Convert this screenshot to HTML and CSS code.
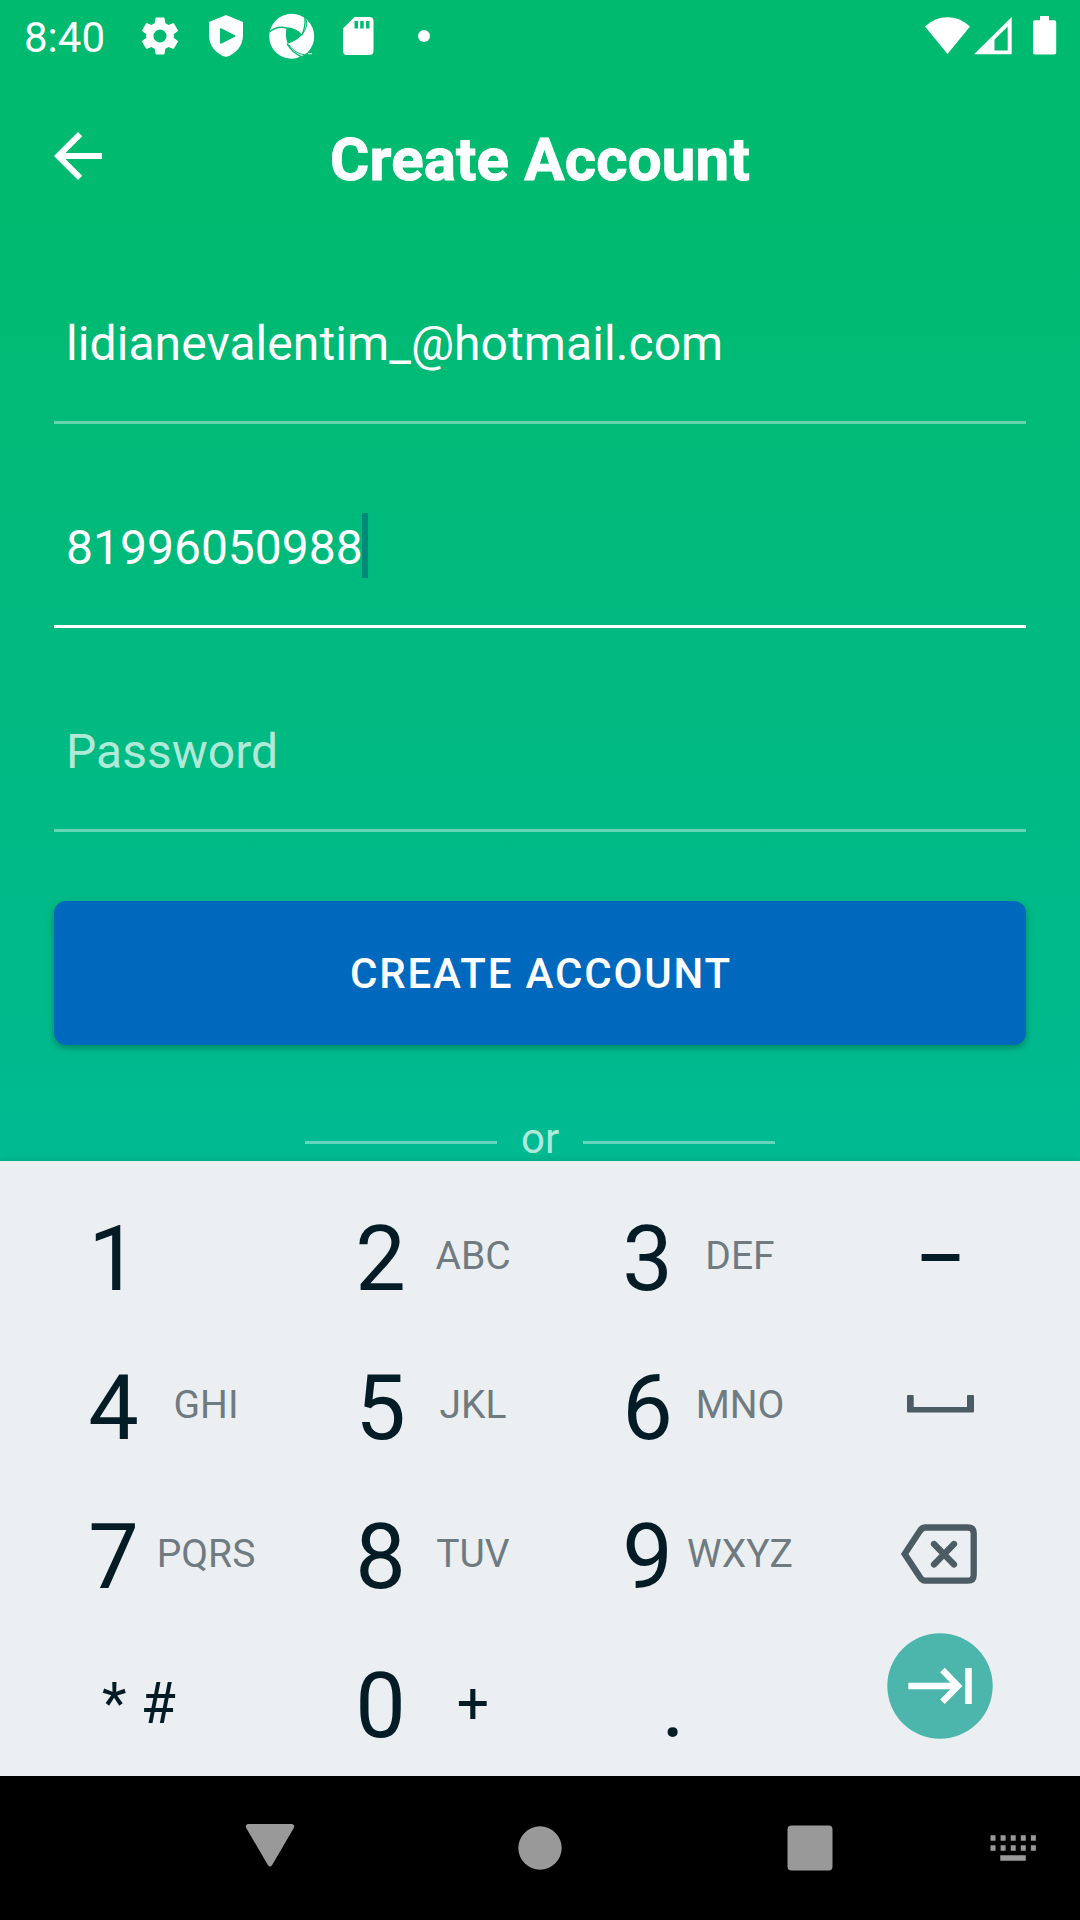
FILE: index.html
```html
<!DOCTYPE html>
<html lang="en">
<head>
<meta charset="utf-8">
<title>Create Account</title>
<link rel="stylesheet" href="styles.css">
</head>
<body>
<div class="screen">
  <div class="app">
    <div class="status">
      <span class="clock">8:40</span>
      <svg class="notifications" width="300" height="72" viewBox="132 0 300 72" fill="#fff">
        <path transform="translate(137 13) scale(1.917)" d="M19.14 12.94c.04-.3.06-.61.06-.94 0-.32-.02-.64-.07-.94l2.03-1.58c.18-.14.23-.41.12-.61l-1.92-3.32c-.12-.22-.37-.29-.59-.22l-2.39.96c-.5-.38-1.03-.7-1.62-.94l-.36-2.54c-.04-.24-.24-.41-.48-.41h-3.84c-.24 0-.43.17-.47.41l-.36 2.54c-.59.24-1.13.57-1.62.94l-2.39-.96c-.22-.08-.47 0-.59.22L2.74 8.87c-.12.21-.08.47.12.61l2.03 1.58c-.05.3-.09.63-.09.94s.02.64.07.94l-2.03 1.58c-.18.14-.23.41-.12.61l1.92 3.32c.12.22.37.29.59.22l2.39-.96c.5.38 1.03.7 1.62.94l.36 2.54c.05.24.24.41.48.41h3.84c.24 0 .44-.17.47-.41l.36-2.54c.59-.24 1.13-.56 1.62-.94l2.39.96c.22.08.47 0 .59-.22l1.92-3.32c.12-.22.07-.47-.12-.61l-2.01-1.58zM12 15.4a3.4 3.4 0 1 1 0-6.8 3.4 3.4 0 0 1 0 6.8z"/>
        <path fill-rule="evenodd" d="M226 15l17 7v13c0 11-7 19-17 22-10-3-17-11-17-22V22zM221 28.3c-.6-.3-1 0-1 .7v14c0 .7.4 1 1 .7l14-7c.6-.3.6-1.100 0-1.400z"/>
        <g fill="none" stroke="#00ba70" stroke-width="1.400">
          <circle cx="291.700" cy="36.300" r="22.500" fill="#fff" stroke="none"/>
          <path fill="#00ba70" stroke="none" d="M286.500 28C292 28 298 30.500 301.700 35.200 297.500 39.500 293 42 287.700 43.700 285.500 38 285.500 33 286.500 28z"/>
          <path d="M269.500 32C274 28 281 26.500 287 28 293 28.600 298 31 301.700 35.200"/>
          <path d="M305 18C305.500 25 304.500 30 301.700 35.200"/>
          <path d="M287 43.500C290 49 294.500 53.500 301 56.500"/>
          <path stroke-width="1" d="M304 16.500C308 21 307.500 27 303 33"/>
          <path stroke-width="1" d="M289 45C293 51 299 54.500 307 55"/>
        </g>
        <path fill="#00ba70" d="M298 57.500l9-3.500 7-8v14h-16z"/>
        <path d="M308 53.200h4v1h-4z"/>
        <path fill-rule="evenodd" d="M354.500 17H369.500a4 4 0 0 1 4 4V51a4 4 0 0 1-4 4H347a4 4 0 0 1-4-4V28.500zM354.500 21v7.500h3.500V21zM360.200 21v7.500h3.500V21zM366 21v7.500h3.500V21z"/>
        <circle cx="424" cy="36" r="6"/>
      </svg>
      <svg class="system" width="140" height="72" viewBox="920 0 140 72" fill="#fff">
        <path d="M947.500 54L925 26.500C938 14 957 14 970 26.500z"/>
        <path fill-rule="evenodd" d="M974 54.300L1011.700 17V54.300zM994.500 50.500H1007.700V26.500L994.500 39.500z"/>
        <path d="M1040 16h9v4.300h5.200a2 2 0 0 1 2 2V52.500a2 2 0 0 1-2 2H1035a2 2 0 0 1-2-2V22.300a2 2 0 0 1 2-2h5z"/>
      </svg>
    </div>

    <header class="toolbar">
      <svg class="back" width="72" height="72" viewBox="0 0 24 24" fill="#fff"><path d="M20 11H7.830l5.590-5.590L12 4l-8 8 8 8 1.410-1.410L7.830 13H20v-2z"/></svg>
      <h1 class="title">Create Account</h1>
    </header>

    <form class="form">
      <div class="field"><span class="email">lidianevalentim_@hotmail.com</span></div>
      <div class="field focused"><span>81996050988</span><i class="caret"></i></div>
      <div class="field placeholder"><span>Password</span></div>
      <button class="submit" type="button">CREATE ACCOUNT</button>
      <div class="divider"><i class="rule"></i><span class="or">or</span><i class="rule"></i></div>
    </form>
  </div>

  <div class="keyboard">
    <div class="key"><b>1</b></div>
    <div class="key"><b>2</b><small>ABC</small></div>
    <div class="key"><b>3</b><small>DEF</small></div>
    <div class="key side"><span class="dash">–</span></div>

    <div class="key"><b>4</b><small>GHI</small></div>
    <div class="key"><b>5</b><small>JKL</small></div>
    <div class="key"><b>6</b><small>MNO</small></div>
    <div class="key side">
      <svg width="80" height="149" viewBox="900 1329 80 149" fill="#4c5c65"><path d="M908 1395h4.700a1 1 0 0 1 1 1v11H967v-11a1 1 0 0 1 1-1h5a1 1 0 0 1 1 1v15.500a1 1 0 0 1-1 1H908a1 1 0 0 1-1-1V1396a1 1 0 0 1 1-1z"/></svg>
    </div>

    <div class="key"><b>7</b><small>PQRS</small></div>
    <div class="key"><b>8</b><small>TUV</small></div>
    <div class="key"><b>9</b><small>WXYZ</small></div>
    <div class="key side">
      <svg width="80" height="149" viewBox="900 1478 80 149" fill="none" stroke="#4c5c65" stroke-width="6.300">
        <path d="M904.700 1554L919.500 1531.500Q922 1527.500 925 1527.500H968Q973.700 1527.500 973.700 1533V1575Q973.700 1580.700 968 1580.700H925Q922 1580.700 919.500 1576.500z"/>
        <path stroke-linecap="round" d="M934 1544l20 20.500M954 1544l-20 20.500"/>
      </svg>
    </div>

    <div class="key symbols">* #</div>
    <div class="key"><b>0</b><span class="plus">+</span></div>
    <div class="key point">.</div>
    <div class="key side">
      <svg width="110" height="149" viewBox="885 1627 110 149">
        <circle cx="940" cy="1686" r="52.700" fill="#4db6ac"/>
        <path fill="none" stroke="#fff" stroke-width="6.300" d="M908.300 1686H957M942.500 1670L958 1686 942.500 1701.700"/>
        <path fill="#fff" d="M965.300 1668h6.500v36h-6.500z"/>
      </svg>
    </div>
  </div>

  <nav class="navbar">
    <svg width="60" height="144" viewBox="240 1776 60 144"><path d="M248.500 1824H291.500C294 1824 295 1826 293.500 1828.500L272 1865.200Q270 1867.800 268 1865.200L246.500 1828.500C245 1826 246 1824 248.500 1824z"/></svg>
    <svg width="60" height="144" viewBox="510 1776 60 144"><circle cx="540" cy="1848" r="21.700"/></svg>
    <svg width="60" height="144" viewBox="780 1776 60 144"><rect x="787.500" y="1825.500" width="45" height="45" rx="4"/></svg>
    <svg class="switcher" width="60" height="144" viewBox="983 1776 60 144"><path d="M990.500 1835.300h5v5.400h-5zm10.100 0h5v5.400h-5zm10.100 0h5v5.400h-5zm10.100 0h5v5.400h-5zm10.100 0h5v5.400h-5zM990.500 1845.300h5v5.400h-5zm10.100 0h5v5.400h-5zm10.100 0h5v5.400h-5zm10.100 0h5v5.400h-5zm10.100 0h5v5.400h-5zM1000.300 1855.300h25.500v5.400h-25.500z"/></svg>
  </nav>
</div>
</body>
</html>
```
FILE: styles.css
```css
* { box-sizing: border-box; }
body { margin: 0; font-family: Roboto, "Liberation Sans", sans-serif; }
svg { display: block; flex: none; }

.screen { width: 1080px; height: 1920px; display: flex; flex-direction: column; overflow: hidden; }

.app {
  height: 1161px;
  color: #fff;
  background: linear-gradient(#00ba70 0, #00ba70 215px, #00ba92 1161px);
}

.status { height: 72px; display: flex; align-items: center; padding-left: 24px; }
.clock { width: 108px; font-size: 42px; line-height: 72px; padding-top: 3px; }
.system { margin-left: auto; margin-right: 20px; }

.toolbar { height: 168px; display: grid; grid-template-columns: 72px 1fr 72px; padding: 0 42px; }
.back { margin-top: 48px; }
.title {
  margin: 48px 0 0;
  font-size: 60px;
  font-weight: 700;
  line-height: 80px;
  letter-spacing: .2px;
  text-align: center;
  -webkit-text-stroke: 1px #fff;
}

.form { padding: 0 54px; }
.field {
  height: 204px;
  display: flex;
  align-items: flex-end;
  padding: 0 12px 45px;
  border-bottom: 3px solid rgba(255, 255, 255, .4);
  font-size: 48px;
  line-height: 65px;
}
.field:first-child { height: 184px; }
.focused { border-bottom-color: #fff; }
.email { letter-spacing: .08px; }
.placeholder span { color: rgba(255, 255, 255, .7); }
.caret { width: 6px; height: 65px; margin: 0 0 2px -1px; background: #00897b; }

.submit {
  display: block;
  width: 100%;
  height: 144px;
  margin-top: 69px;
  padding: 0 0 0 2px;
  border: 0;
  border-radius: 12px;
  background: #0069bd;
  color: #fff;
  font: 500 42px Roboto, "Liberation Sans", sans-serif;
  letter-spacing: 1.850px;
  box-shadow: 0 3px 7px rgba(0, 0, 0, .28);
}

.divider { display: flex; justify-content: center; align-items: center; gap: 24px; margin-top: 69px; height: 56px; }
.rule { width: 192px; height: 3px; background: rgba(255, 255, 255, .4); }
.or { width: 38px; padding-bottom: 6px; font-size: 42px; line-height: 50px; text-align: center; color: rgba(255, 255, 255, .7); }

.keyboard {
  position: relative;
  height: 615px;
  display: grid;
  grid-template-columns: 267px 267px 267px 237px;
  grid-auto-rows: 149px;
  padding: 19px 20px 0;
  background: #ebeff2;
  color: #041c26;
  box-shadow: 0 0 7px rgba(0, 0, 0, .14);
}
.key { display: grid; grid-template-columns: 80px 106px; align-items: center; justify-items: center; padding-left: 53px; }
.key b { font-size: 90px; font-weight: 400; line-height: 120px; padding: 10px 0 0 1px; }
.key small { font-size: 39px; line-height: 50px; padding-top: 2px; color: #6f7b81; }
.side { display: flex; justify-content: center; padding: 0; }
.dash { padding: 0 0 16px 2px; font: 90px/120px "Noto Sans", sans-serif; }
.symbols { display: flex; justify-content: flex-start; padding: 4px 0 0 82px; font-size: 57px; white-space: pre; }
.plus { padding-top: 4px; font-size: 57px; }
.point { display: flex; justify-content: center; padding: 8px 29px 0 0; font-size: 90px; line-height: 120px; }

.navbar {
  position: relative;
  height: 144px;
  display: flex;
  gap: 210px;
  padding-left: 240px;
  background: #000;
  fill: #999;
}
.switcher { margin-left: -67px; }
```
